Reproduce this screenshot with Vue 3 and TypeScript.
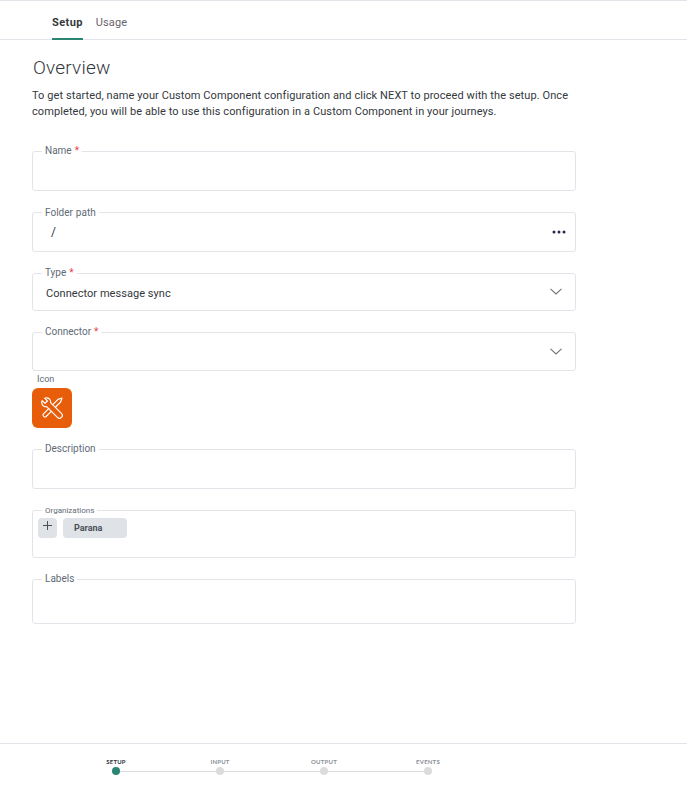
<script setup lang="ts">
interface Step { label: string; active: boolean }
const steps: Step[] = [
  { label: 'SETUP', active: true },
  { label: 'INPUT', active: false },
  { label: 'OUTPUT', active: false },
  { label: 'EVENTS', active: false },
]
</script>

<template>
  <div class="page">
    <nav class="tabs">
      <a class="tab active">Setup</a>
      <a class="tab">Usage</a>
    </nav>

    <main class="content">
      <h1 class="title">Overview</h1>
      <p class="intro">
        To get started, name your Custom Component configuration and click NEXT to proceed with the setup. Once
        completed, you will be able to use this configuration in a Custom Component in your journeys.
      </p>

      <div class="form">
        <div class="field h40">
          <label class="legend">Name <span class="req">*</span></label>
        </div>

        <div class="field h40 row dots-row">
          <label class="legend low">Folder path</label>
          <span class="path">/</span>
          <svg class="dots" width="14" height="4" viewBox="0 0 14 4">
            <circle cx="2" cy="2" r="1.5" />
            <circle cx="7" cy="2" r="1.5" />
            <circle cx="12" cy="2" r="1.5" />
          </svg>
        </div>

        <div class="field h38 row">
          <label class="legend">Type <span class="req">*</span></label>
          <span class="value">Connector message sync</span>
          <svg class="chev" width="12" height="7" viewBox="0 0 12 7">
            <path d="M.5 .8L6 6l5.5-5.2" />
          </svg>
        </div>

        <div class="field h39 row">
          <label class="legend">Connector <span class="req">*</span></label>
          <span class="value"></span>
          <svg class="chev" width="12" height="7" viewBox="0 0 12 7">
            <path d="M.5 .8L6 6l5.5-5.2" />
          </svg>
        </div>

        <div class="icon-block">
          <span class="icon-label">Icon</span>
          <div class="icon-tile">
            <svg width="24" height="24" viewBox="0 0 24 24">
              <path d="M6.6 10.6C4.5 11 2 9.5 1.8 7 1.7 6 1.9 5.2 2.2 4.6L5 7.4 7.4 5 4.6 2.2C5.2 1.9 6 1.7 7 1.8 9.5 2 11 4.5 10.6 6.6L21.4 17.4A2.7 2.7 0 0 1 17.4 21.4Z" />
              <path d="M9.2 12.2L3 18.4A2.4 2.4 0 0 0 5.6 21L11.8 14.8" />
              <path d="M13 8.4L18 3.4 22 2 20.6 6 15.6 11" />
            </svg>
          </div>
        </div>

        <div class="field h40">
          <label class="legend">Description</label>
        </div>

        <div class="field h48 orgs">
          <label class="legend small low">Organizations</label>
          <button class="add" type="button">
            <svg width="9" height="9" viewBox="0 0 9 9"><path d="M4.5 0v9M0 4.5h9" /></svg>
          </button>
          <span class="chip">Parana</span>
        </div>

        <div class="field h45">
          <label class="legend">Labels</label>
        </div>
      </div>
    </main>

    <footer class="footer">
      <ol class="stepper">
        <li v-for="s in steps" :key="s.label" class="step" :class="{ on: s.active }">
          <span class="step-label">{{ s.label }}</span>
          <span class="dot"></span>
        </li>
      </ol>
    </footer>
  </div>
</template>

<style>
html, body { margin: 0; background: #fff; }
</style>

<style scoped>
.page {
  width: 687px;
  height: 790px;
  display: flex;
  flex-direction: column;
  box-sizing: border-box;
  border-top: 1px solid #e2e4e9;
  font-family: Roboto, "Liberation Sans", sans-serif;
  color: #2f3338;
  overflow: hidden;
}
.tabs {
  height: 39px;
  box-sizing: border-box;
  display: flex;
  gap: 13px;
  padding-left: 52px;
  border-bottom: 1px solid #e2e4e9;
  flex: none;
}
.tab {
  position: relative;
  font-size: 11px;
  line-height: 16px;
  padding-top: 14px;
  letter-spacing: 0.1px;
  color: #6a5f6b;
}
.tab.active {
  font-weight: 700;
  letter-spacing: 0.4px;
  color: #33383d;
}
.tab.active::after {
  content: "";
  position: absolute;
  left: 0;
  right: 0;
  bottom: -1px;
  height: 2px;
  background: #2a8572;
}
.content {
  flex: 1;
  padding: 15px 0 0 32px;
  width: 544px;
}
.title {
  margin: 0;
  font-size: 19px;
  font-weight: 300;
  line-height: 26px;
  padding-left: 1px;
  letter-spacing: 0.2px;
  color: #33383d;
}
.intro {
  margin: 7px 0 0;
  font-size: 11px;
  line-height: 16px;
  letter-spacing: 0.09px;
  color: #33383d;
  width: 540px;
}
.form {
  margin-top: 31px;
  display: flex;
  flex-direction: column;
  gap: 21px;
}
.field {
  box-sizing: border-box;
  border: 1px solid #e2e4e9;
  border-radius: 3px;
  position: relative;
}
.legend {
  position: absolute;
  left: 9px;
  top: -7px;
  padding: 0 3px;
  background: #fff;
  font-size: 10px;
  line-height: 12px;
  word-spacing: 0.5px;
  color: #5f6b76;
}
.legend.low {
  top: -6px;
}
.legend.small {
  font-size: 8px;
}
.req { color: #e8414f; }
.h40 { height: 40px; }
.h38 { height: 38px; }
.h39 { height: 39px; }
.h48 { height: 48px; }
.h45 { height: 45px; }
.row {
  display: flex;
  align-items: center;
  justify-content: space-between;
  padding: 0 13px;
}
.dots-row { padding-right: 9px; }
.path {
  font-size: 12px;
  padding-left: 5px;
  margin-top: -1px;
  color: #33383d;
}
.dots {
  margin-top: -1px;
  fill: #26264d;
}
.value {
  font-size: 11px;
  letter-spacing: 0.05px;
  margin-top: 2px;
  color: #33383d;
}
.chev {
  fill: none;
  stroke: #707378;
  stroke-width: 1.1;
  margin-top: -1px;
}
.icon-block {
  display: flex;
  flex-direction: column;
  margin-top: -19px;
}
.icon-label {
  font-size: 9px;
  line-height: 12px;
  padding-left: 5px;
  color: #5f6b76;
}
.icon-tile {
  width: 40px;
  height: 40px;
  margin-top: 3px;
  border-radius: 6px;
  background: #e85d0a;
  display: flex;
  align-items: center;
  justify-content: center;
}
.icon-tile svg {
  fill: none;
  stroke: #fff;
  stroke-width: 1.2;
  stroke-linejoin: round;
}
.orgs {
  display: flex;
  align-items: flex-start;
  gap: 6px;
  padding: 7px 0 0 5px;
}
.add {
  width: 19px;
  height: 20px;
  padding: 3px 0 0;
  border: 0;
  border-radius: 4px;
  background: #dfe2e6;
  display: flex;
  justify-content: center;
  box-sizing: border-box;
}
.add svg {
  fill: none;
  stroke: #4b5058;
  stroke-width: 1;
}
.chip {
  width: 64px;
  height: 20px;
  box-sizing: border-box;
  padding-left: 11px;
  border-radius: 4px;
  background: #dfe2e6;
  font-size: 9px;
  font-weight: 700;
  line-height: 20px;
  color: #4b5058;
}
.footer {
  flex: none;
  height: 47px;
  box-sizing: border-box;
  border-top: 1px solid #e2e4e9;
  padding-left: 116px;
}
.stepper {
  list-style: none;
  margin: 0;
  padding: 0;
  display: flex;
}
.step {
  position: relative;
  width: 104px;
  height: 46px;
}
.step:not(:last-child)::before {
  content: "";
  position: absolute;
  left: 0;
  width: 104px;
  top: 27px;
  height: 1px;
  background: #dcdcdc;
}
.step-label {
  position: absolute;
  left: 0;
  top: 14px;
  transform: translateX(-50%);
  font-family: Lato, Roboto, sans-serif;
  font-size: 6px;
  line-height: 8px;
  font-weight: 700;
  letter-spacing: 0.2px;
  color: #8a8f96;
}
.dot {
  position: absolute;
  left: -4px;
  top: 23px;
  width: 8px;
  height: 8px;
  border-radius: 50%;
  background: #dcdcdc;
}
.step.on .dot { background: #2a8572; }
.step.on .step-label { color: #2f3338; }
</style>
